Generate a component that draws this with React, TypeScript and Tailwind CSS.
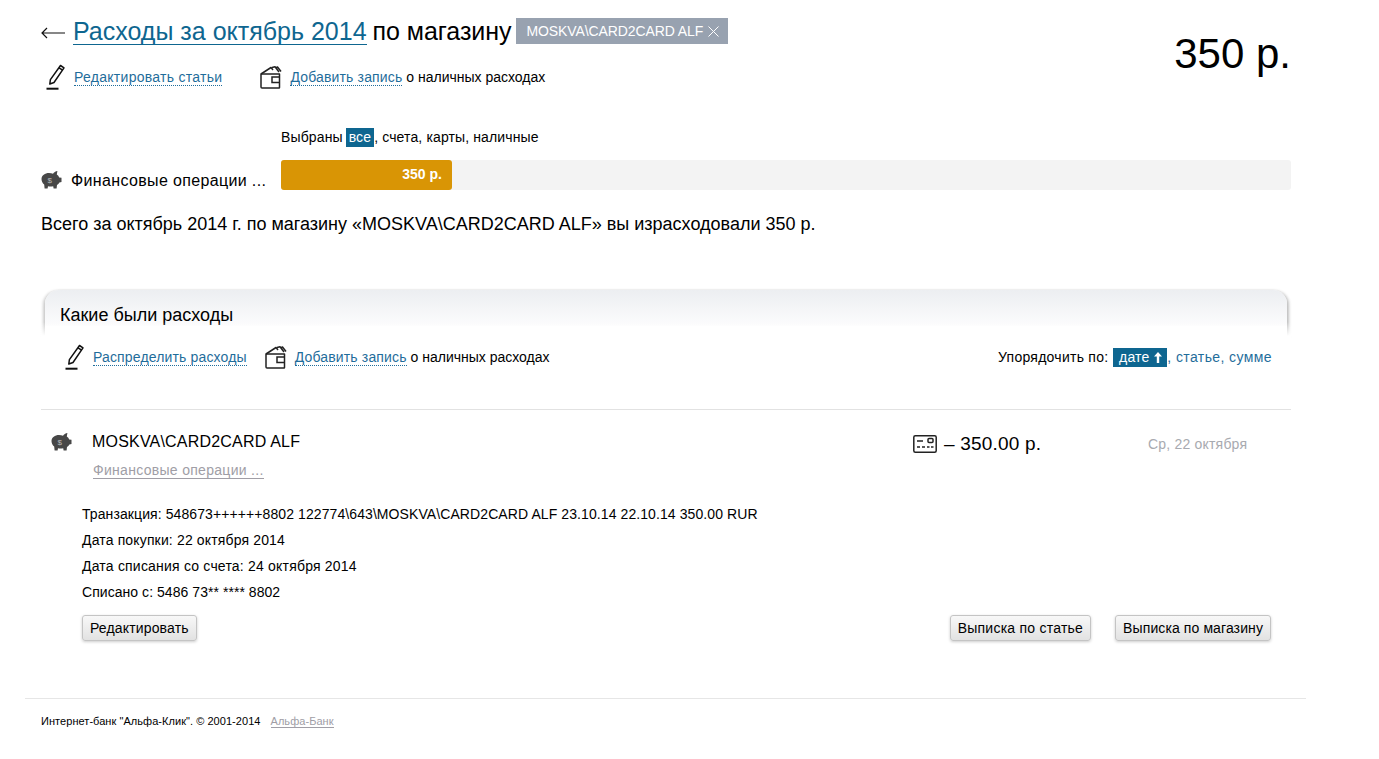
import type { ReactNode } from 'react';

const PencilIcon = () => (
  <svg width="20" height="26" viewBox="0 0 20 26" fill="none" stroke="#111" strokeWidth="1.5" className="shrink-0">
    <path d="M14.5 1.5 L18 3.8 L8 18.5 L3.8 20 L4.4 15.6 Z" strokeLinejoin="round" />
    <path d="M13 3.8 L16.6 6.2" />
    <path d="M0.5 24.7 H12.5" strokeWidth="2" />
  </svg>
);

const WalletIcon = () => (
  <svg width="25" height="23" viewBox="0 0 25 23" fill="none" stroke="#222" strokeWidth="1.5" className="shrink-0">
    <path d="M1 8 H19.5 V21.5 Q19.5 22 19 22 H2 Q1 22 1 21 Z" strokeLinejoin="round" />
    <path d="M1 8 L11 1.5 L13 4 M12 1.5 L15 0.8 L19 6 M15.5 2 L17.5 1 L21 5.5" strokeLinejoin="round" />
    <path d="M19.5 11 H12 V16.5 H19.5" />
  </svg>
);

const PiggyIcon = () => (
  <svg width="21" height="19" viewBox="0 0 21 19" className="shrink-0">
    <path
      fill="#474747"
      d="M0.5 9 C0.5 5.5 4 3 8 3 C9.5 3 10.8 3.2 12 3.7 C13 2.4 14.5 1.2 16.4 1 L15.8 4.6 C17 5.4 17.8 6.4 18.2 7.4 L20.5 7.8 L20.5 12 L18.4 12.4 C17.8 13.6 17 14.5 16 15.1 L15.6 18.4 L12.6 18.4 L12.2 16.2 C10.5 16.6 8.6 16.6 7 16.2 L6.6 18.4 L3.6 18.4 L3.2 14.6 C1.5 13.2 0.5 11.2 0.5 9 Z"
    />
    <text x="8.8" y="12.5" fontSize="8" fill="#bbb" textAnchor="middle" fontFamily="Liberation Sans">$</text>
  </svg>
);

const CardIcon = () => (
  <svg width="24" height="18" viewBox="0 0 24 18" fill="none" stroke="#222" strokeWidth="1.5" className="shrink-0">
    <rect x="0.8" y="0.8" width="22.4" height="16.4" rx="1.5" />
    <path d="M4 6 H10 M4 12 H7 M9 12 H12 M14 12 H16.5 M18 12 H20.5" />
    <rect x="15" y="3.6" width="5" height="4" rx="1" />
  </svg>
);

const DotLink = ({ children, className = 'tracking-[0.15px]' }: { children: ReactNode; className?: string }) => (
  <a className={`text-[#1f6d9b] border-b border-dotted border-[#1f6d9b] leading-[14px] ${className}`}>{children}</a>
);

const Btn = ({ children, className = '' }: { children: ReactNode; className?: string }) => (
  <button className={`h-[26px] px-[7px] text-[14px] text-black rounded-[3px] border border-[#c4c4c4] bg-gradient-to-b from-[#f8f8f8] to-[#e2e2e2] shadow-[0_1px_3px_rgba(0,0,0,0.2)] ${className}`}>
    {children}
  </button>
);

export default function App() {
  return (
    <div className="w-[1379px] h-[759px] bg-white text-black text-[14px] font-['Liberation_Sans',Arial,sans-serif] overflow-hidden">
      <div className="ml-[41px] w-[1250px]">
        <div className="flex justify-between items-start pt-[18px]">
          <div>
            <div className="flex items-center h-[27px] text-[25px] leading-[27px]">
              <svg width="24" height="12" viewBox="0 0 24 12" fill="none" stroke="#111" strokeWidth="1.2" className="mr-[8px] mt-[3px] shrink-0">
                <path d="M1 6 H24 M6 1 L1 6 L6 11" />
              </svg>
              <a className="text-[#0e6690] border-b border-[#0e6690] leading-[26px]">Расходы за октябрь 2014</a>
              <span className="ml-[6px] tracking-[-0.05px]">по магазину</span>
              <span className="ml-[5px] -mt-px h-[26px] flex items-center gap-[5px] pl-[10px] pr-[9px] bg-[#98a2b0] text-white text-[14px] tracking-[-0.1px]">
                MOSKVA\CARD2CARD ALF
                <svg width="11" height="11" viewBox="0 0 11 11" stroke="#fff" strokeWidth="1"><path d="M0.5 0.5 L10.5 10.5 M10.5 0.5 L0.5 10.5" /></svg>
              </span>
            </div>
            <div className="flex items-center mt-[18px] ml-[5px] h-[28px]">
              <PencilIcon />
              <span className="ml-[8px]"><DotLink className="tracking-[0.28px]">Редактировать статьи</DotLink></span>
              <span className="ml-[38px]"><WalletIcon /></span>
              <span className="ml-[5px]"><DotLink>Добавить запись</DotLink> о наличных расходах</span>
            </div>
          </div>
          <div className="text-[42px] leading-[48px] mt-[12px]">350 р.</div>
        </div>

        <div className="mt-[35px] ml-[240px] h-[22px] flex items-center tracking-[0.13px]">
          Выбраны <span className="ml-[3px] px-[3px] h-[19px] leading-[19px] bg-[#0e6690] text-white">все</span>, счета, карты, наличные
        </div>

        <div className="flex mt-[12px] h-[30px]">
          <div className="w-[240px] flex items-end gap-[9px] text-[16px] leading-[20px] tracking-[0.35px] -mb-px">
            <span className="mb-[2px]"><PiggyIcon /></span>
            <span>Финансовые операции ...</span>
          </div>
          <div className="flex-1 bg-[#f3f3f3] rounded-[3px]">
            <div className="w-[171px] h-[30px] bg-[#d99505] rounded-[3px] text-white font-bold text-right pr-[10px] leading-[29px]">350 р.</div>
          </div>
        </div>

        <p className="mt-[23px] text-[18px] leading-[22px]">Всего за октябрь 2014 г. по магазину «MOSKVA\CARD2CARD ALF» вы израсходовали 350 р.</p>

        <div className="relative mt-[55px] mx-[4px] h-[46px] rounded-t-[14px] bg-[linear-gradient(to_bottom,#eceef1_0%,#fcfcfd_78%,#ffffff_78%)] shadow-[2px_1px_3px_rgba(0,0,0,0.25),-2px_1px_3px_rgba(0,0,0,0.2)] pl-[15px] pt-[14px] text-[18px] leading-[22px]">
          Какие были расходы
          <div className="absolute -left-[6px] -right-[6px] bottom-0 h-[14px] bg-gradient-to-b from-transparent to-white" />
        </div>
        <div className="relative flex items-center justify-between h-[36px] pt-[6px] pl-[24px] pr-[19px] bg-white">
          <div className="flex items-center">
            <PencilIcon />
            <span className="ml-[8px]"><DotLink>Распределить расходы</DotLink></span>
            <span className="ml-[18px]"><WalletIcon /></span>
            <span className="ml-[5px]"><DotLink>Добавить запись</DotLink> о наличных расходах</span>
          </div>
          <div className="flex items-center tracking-[0.25px]">
            Упорядочить по:
            <span className="ml-[5px] w-[54px] flex items-center justify-center gap-[4px] h-[19px] leading-[19px] bg-[#0e6690] text-white">
              дате
              <svg width="8" height="11" viewBox="0 0 8 11" fill="#fff"><path d="M4 0 L8 4.5 H5.2 V11 H2.8 V4.5 H0 Z" /></svg>
            </span>
            <span className="text-[#1f6d9b] tracking-[0.4px]">, статье, сумме</span>
          </div>
        </div>

        <div className="mt-[37px] border-t border-[#e2e2e2] pt-[21px]">
          <div className="flex">
            <div className="w-[51px] pl-[10px] pt-[1px]"><PiggyIcon /></div>
            <div className="flex-1">
              <div className="text-[16px] leading-[22px] tracking-[0.2px]">MOSKVA\CARD2CARD ALF</div>
              <a className="inline-block mt-[10px] ml-[1px] text-[14px] leading-[15px] tracking-[0.3px] text-[#a09ea6] border-b border-[#a09ea6]">Финансовые операции ...</a>
            </div>
            <div className="w-[235px] flex items-center gap-[7px] h-[26px] text-[19px] tracking-[0.2px]">
              <CardIcon /> – 350.00 р.
            </div>
            <div className="w-[143px] text-[#a8aab0] h-[26px] leading-[26px] tracking-[0.2px]">Ср, 22 октября</div>
          </div>
          <div className="ml-[41px] mt-[20px] leading-[26px]">
            <div className="tracking-[0.09px]">Транзакция: 548673++++++8802 122774\643\MOSKVA\CARD2CARD ALF 23.10.14 22.10.14 350.00 RUR</div>
            <div className="tracking-[0.15px]">Дата покупки: 22 октября 2014</div>
            <div className="tracking-[0.2px]">Дата списания со счета: 24 октября 2014</div>
            <div className="tracking-[0.05px]">Списано с: 5486 73** **** 8802</div>
          </div>
          <div className="ml-[41px] mr-[20px] mt-[10px] flex">
            <Btn className="tracking-[0.15px]">Редактировать</Btn>
            <div className="ml-auto flex gap-[24px]">
              <Btn className="tracking-[0.24px]">Выписка по статье</Btn>
              <Btn className="tracking-[0.1px]">Выписка по магазину</Btn>
            </div>
          </div>
        </div>
      </div>
      <div className="ml-[25px] w-[1281px] mt-[57px] border-t border-[#e6e6e6] pt-[16px] pl-[16px] text-[11px] leading-[13px] tracking-[0.05px]">
        Интернет-банк "Альфа-Клик". © 2001-2014
        <a className="ml-[10px] text-[#a09ea6] border-b border-[#a09ea6]">Альфа-Банк</a>
      </div>
    </div>
  );
}
